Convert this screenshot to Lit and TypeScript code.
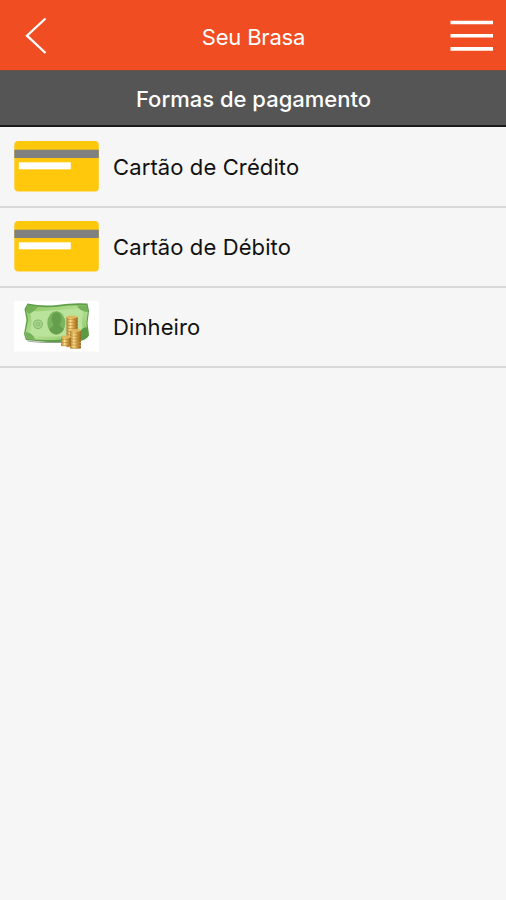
import { LitElement, html, css, svg } from "lit";
import { customElement, property } from "lit/decorators.js";

@customElement("card-icon")
class CardIcon extends LitElement {
  static styles = css`
    :host, svg { display: block; }
  `;
  render() {
    return html`<svg width="85" height="51" viewBox="0 0 85 51">
      <rect x="0.3" y="0" width="84.5" height="50.5" rx="4" fill="#ffc80c" />
      <rect x="0.3" y="8.7" width="84.5" height="8.3" fill="#808080" />
      <rect x="4.8" y="21.3" width="52" height="7" fill="#fff" />
    </svg>`;
  }
}

@customElement("cash-icon")
class CashIcon extends LitElement {
  static styles = css`
    :host, svg { display: block; }
  `;

  private coins(x: number, top: number, bottom: number, width: number) {
    const rows = [];
    for (let y = top; y < bottom; y += 3) {
      rows.push(svg`
        <rect x=${x} y=${y} width=${width} height="3" rx="1" fill="url(#gold)" />
        <path d="M${x + 0.5} ${y + 2.7}h${width - 1}" stroke="#b07a2a" stroke-width=".6" />`);
    }
    return svg`${rows}<ellipse cx=${x + width / 2} cy=${top} rx=${width / 2} ry="1.4" fill="#dfb65c" />`;
  }

  render() {
    return html`<svg width="85" height="51" viewBox="0 0 85 51">
      <defs>
        <linearGradient id="bill" x1="0" y1="0" x2="1" y2="1">
          <stop offset="0" stop-color="#8cc766" />
          <stop offset=".5" stop-color="#b5df92" />
          <stop offset="1" stop-color="#86c162" />
        </linearGradient>
        <linearGradient id="gold">
          <stop offset="0" stop-color="#b07824" />
          <stop offset=".35" stop-color="#f8df90" />
          <stop offset=".65" stop-color="#cf9a3a" />
          <stop offset="1" stop-color="#96601a" />
        </linearGradient>
      </defs>
      <rect width="85" height="50.5" fill="#fff" />
      <path d="M13 39.500Q28 41.500 48 41L47 42Q28 42.500 14 40.500Z" fill="#9aa09c" />
      <path d="M13.500 2.500Q28 5.500 43 4Q59 1.500 73.500 2.500L75 10L73.500 22L75 34Q73 39 66 40Q42 42 27 40.500L12 39L10 33L12.500 19L10.500 8Z" fill="#5f9f49" />
      <path d="M14 4.500Q29 7 43 5.800Q58 3.800 72.500 4.500L73.800 11L72.500 22L73.500 34Q55 38.500 40 39Q25 39.500 13 37.500L11.300 33L14 19L12 9Z" fill="url(#bill)" />
      <path d="M16 10Q30 10.500 44 9Q57 7.500 69 8L68 22L69 33Q45 37 16 35L17.500 20Z" fill="#b9e29a" />
      <path d="M13.500 4L24 6Q21 10 15 13L11.500 9ZM11 31Q18 31 21 38L13 37.500ZM63 4.500L73 4.500L74 11Q66 11 63 4.500Z" fill="#74b158" />
      <path d="M67 29Q72 24 74 28L74.500 35Q72 38 65 39Z" fill="#5b9a45" />
      <circle cx="24" cy="23.300" r="4.300" fill="#a8d48d" stroke="#84b96b" stroke-width="1.100" />
      <circle cx="24" cy="23.300" r="1.700" fill="none" stroke="#84b96b" />
      <ellipse cx="42.300" cy="22" rx="9" ry="11.700" fill="#7ab45d" />
      <ellipse cx="42.500" cy="17.800" rx="5" ry="6.500" fill="#659f4e" />
      <path d="M35 28Q39 26 40 22H45Q46 26 50 28Q47 33 42.300 33.300Q38 33 35 28Z" fill="#659f4e" />
      ${this.coins(52.3, 16, 45, 11.5)}
      ${this.coins(56, 29.5, 45, 11)}
      ${this.coins(47, 36, 45, 10)}
    </svg>`;
  }
}

@customElement("payment-row")
class PaymentRow extends LitElement {
  @property() label = "";
  static styles = css`
    :host {
      display: flex;
      align-items: center;
      gap: 14px;
      box-sizing: border-box;
      height: 80px;
      padding: 0 0 1px 14px;
      border-bottom: 2px solid #d9d9d9;
      color: #111;
    }
    .label {
      padding-top: 1px;
      font-size: 22px;
      line-height: 28px;
      letter-spacing: 0.11px;
      white-space: nowrap;
    }
  `;
  render() {
    return html`<slot></slot><span class="label">${this.label}</span>`;
  }
}

@customElement("app-root")
class AppRoot extends LitElement {
  static styles = css`
    :host {
      display: flex;
      flex-direction: column;
      height: 900px;
      background: #f6f6f6;
      font-family: Inter, "Liberation Sans", sans-serif;
    }
    .bar {
      display: grid;
      grid-template-columns: 80px 1fr 80px;
      align-items: center;
      height: 71px;
      box-sizing: border-box;
      border-bottom: 1px solid #6e5046;
      background: #f14d23;
      color: #fff;
    }
    .bar svg { display: block; }
    .menu { justify-self: end; }
    .title {
      padding: 4px 0 0 1px;
      font-size: 22px;
      line-height: 28px;
      letter-spacing: -0.2px;
      text-align: center;
    }
    .heading {
      box-sizing: border-box;
      height: 56px;
      padding-left: 1px;
      border-bottom: 2px solid #1c1a1a;
      background: #555;
      color: #fff;
      font-size: 22px;
      font-weight: 500;
      line-height: 57px;
      text-align: center;
    }
    .list { padding-top: 1px; }
  `;
  render() {
    return html`
      <header class="bar">
        <svg width="60" height="70" viewBox="0 0 60 70" fill="none" stroke="#fff" stroke-width="2.300">
          <path d="M45.500 18.500L27 35.700L45.500 53" />
        </svg>
        <div class="title">Seu Brasa</div>
        <svg class="menu" width="56" height="70" viewBox="0 0 56 70" stroke="#fff" stroke-width="3.600">
          <path d="M0.500 22.500H43M0.500 35.700H43M0.500 48.900H43" />
        </svg>
      </header>
      <div class="heading">Formas de pagamento</div>
      <main class="list">
        <payment-row label="Cartão de Crédito"><card-icon></card-icon></payment-row>
        <payment-row label="Cartão de Débito"><card-icon></card-icon></payment-row>
        <payment-row label="Dinheiro"><cash-icon></cash-icon></payment-row>
      </main>
    `;
  }
}
